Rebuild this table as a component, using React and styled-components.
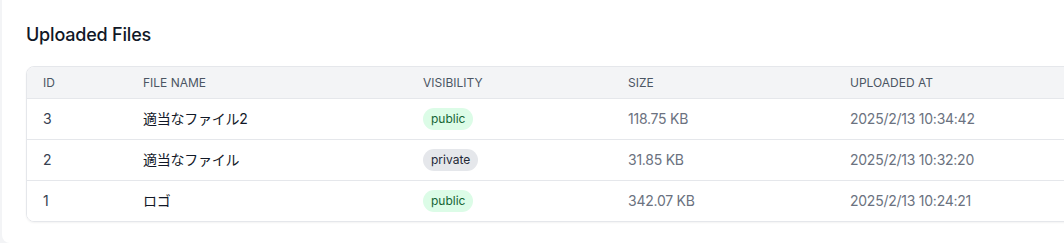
import React from "react";
import styled, { createGlobalStyle } from "styled-components";

const GlobalStyle = createGlobalStyle`
  body {
    margin: 0;
    background: #f3f4f6;
    overflow: hidden;
    font-family: Inter, "Noto Sans CJK JP", sans-serif;
  }
`;

const Page = styled.div`
  padding-left: 2px;
`;

const Card = styled.section`
  margin-top: -8px;
  width: 1100px;
  background: #ffffff;
  border-radius: 8px;
  padding: 29px 24px 21px;
`;

const Title = styled.h2`
  margin: 0 0 17px;
  font-size: 18px;
  line-height: 28px;
  font-weight: 500;
  letter-spacing: -0.2px;
  color: #111827;
`;

const Table = styled.div`
  border: 1px solid #e5e7eb;
  border-radius: 8px;
  overflow: hidden;
  box-shadow: 0 1px 2px rgba(0, 0, 0, 0.05);
`;

const Row = styled.div`
  display: grid;
  grid-template-columns: 100px 280px 205px 222px 1fr;
  align-items: center;
  box-sizing: border-box;
  height: ${(p) => (p.$head ? "32px" : "41px")};
  background: ${(p) => (p.$head ? "#f3f4f6" : "#ffffff")};
  border-bottom: 1px solid #e5e7eb;

  &:last-child {
    border-bottom: none;
    height: 40px;
  }
`;

const HeadCell = styled.div`
  padding: 0 16px;
  font-size: 12px;
  line-height: 16px;
  font-weight: 400;
  color: #4b5563;
  text-transform: uppercase;
`;

const Cell = styled.div`
  padding: 0 16px;
  font-size: 14px;
  line-height: 20px;
  letter-spacing: -0.25px;
  color: ${(p) => p.$color || "#6b7280"};
  white-space: nowrap;
`;

const Badge = styled.span`
  display: inline-block;
  padding: 3px 8px;
  border-radius: 9999px;
  font-size: 12px;
  line-height: 16px;
  font-weight: 400;
  letter-spacing: 0;
  background: ${(p) => (p.$public ? "#dcfce7" : "#e5e7eb")};
  color: ${(p) => (p.$public ? "#166534" : "#1f2937")};
`;

const files = [
  { id: 3, name: "適当なファイル2", visibility: "public", size: "118.75 KB", at: "2025/2/13 10:34:42" },
  { id: 2, name: "適当なファイル", visibility: "private", size: "31.85 KB", at: "2025/2/13 10:32:20" },
  { id: 1, name: "ロゴ", visibility: "public", size: "342.07 KB", at: "2025/2/13 10:24:21" },
];

export default function App() {
  return (
    <Page>
      <GlobalStyle />
      <Card>
        <Title>Uploaded Files</Title>
        <Table>
          <Row $head>
            <HeadCell>ID</HeadCell>
            <HeadCell>File Name</HeadCell>
            <HeadCell>Visibility</HeadCell>
            <HeadCell>Size</HeadCell>
            <HeadCell>Uploaded At</HeadCell>
          </Row>
          {files.map((f) => (
            <Row key={f.id}>
              <Cell $color="#374151">{f.id}</Cell>
              <Cell $color="#111827">{f.name}</Cell>
              <Cell>
                <Badge $public={f.visibility === "public"}>{f.visibility}</Badge>
              </Cell>
              <Cell>{f.size}</Cell>
              <Cell>{f.at}</Cell>
            </Row>
          ))}
        </Table>
      </Card>
    </Page>
  );
}
